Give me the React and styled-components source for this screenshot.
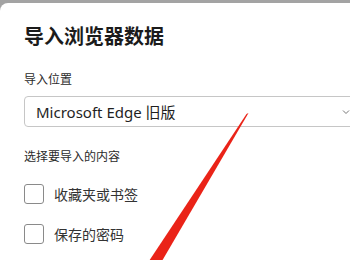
import styled, { createGlobalStyle } from 'styled-components';

const GlobalStyle = createGlobalStyle`
  html, body {
    margin: 0;
    padding: 0;
    background: #a3a3a3;
    overflow: hidden;
  }
  body {
    font-family: "Noto Sans", "Noto Sans CJK SC", sans-serif;
  }
`;

const Dialog = styled.div`
  position: relative;
  margin-top: 3px;
  height: 257px;
  background: #ffffff;
  border-top-left-radius: 8px;
  padding: 20px 0 0 24px;
  box-sizing: border-box;
  overflow: hidden;
`;

const Title = styled.h1`
  margin: 0 0 22px;
  font-family: "Noto Sans CJK SC", sans-serif;
  font-size: 20px;
  font-weight: 700;
  line-height: 26px;
  color: #1b1b1b;
`;

const Label = styled.div`
  font-family: "Noto Sans CJK SC", sans-serif;
  font-size: 12px;
  line-height: 16px;
  color: #2b2b2b;
  margin-bottom: ${(p) => p.$gap || 6}px;
`;

const Select = styled.div`
  display: flex;
  align-items: center;
  justify-content: space-between;
  width: 336px;
  height: 31px;
  box-sizing: border-box;
  border: 1px solid #c6c6c6;
  border-radius: 4px;
  padding: 0 8px 0 11px;
  margin-bottom: 21px;
  font-size: 15px;
  color: #1f1f1f;
`;

const Chevron = styled.svg`
  flex: none;
  color: #777;
`;

const Options = styled.div`
  display: flex;
  flex-direction: column;
  gap: 20px;
`;

const Option = styled.label`
  display: flex;
  align-items: center;
  gap: 10px;
  font-family: "Noto Sans CJK SC", sans-serif;
  font-size: 14px;
  color: #333;
  line-height: 20px;
`;

const Box = styled.span`
  width: 20px;
  height: 20px;
  box-sizing: border-box;
  border: 1px solid #8a8a8a;
  border-radius: 3px;
  background: #fff;
`;

const Annotation = styled.svg`
  position: absolute;
  left: 0;
  top: 0;
  pointer-events: none;
`;

export default function App() {
  return (
    <>
      <GlobalStyle />
      <Dialog>
        <Title>导入浏览器数据</Title>
        <Label $gap={9}>导入位置</Label>
        <Select>
          <span>Microsoft Edge 旧版</span>
          <Chevron width="10" height="10" viewBox="0 0 10 10" fill="none" stroke="currentColor" strokeWidth="1">
            <path d="M2 3.5l3 3 3-3" />
          </Chevron>
        </Select>
        <Label $gap={20}>选择要导入的内容</Label>
        <Options>
          <Option><Box />收藏夹或书签</Option>
          <Option><Box />保存的密码</Option>
        </Options>
        <Annotation width="350" height="257" viewBox="0 3 350 257">
          <polygon points="248.5,113 246.5,114 149,261 162,261" fill="#ea2318" />
        </Annotation>
      </Dialog>
    </>
  );
}
